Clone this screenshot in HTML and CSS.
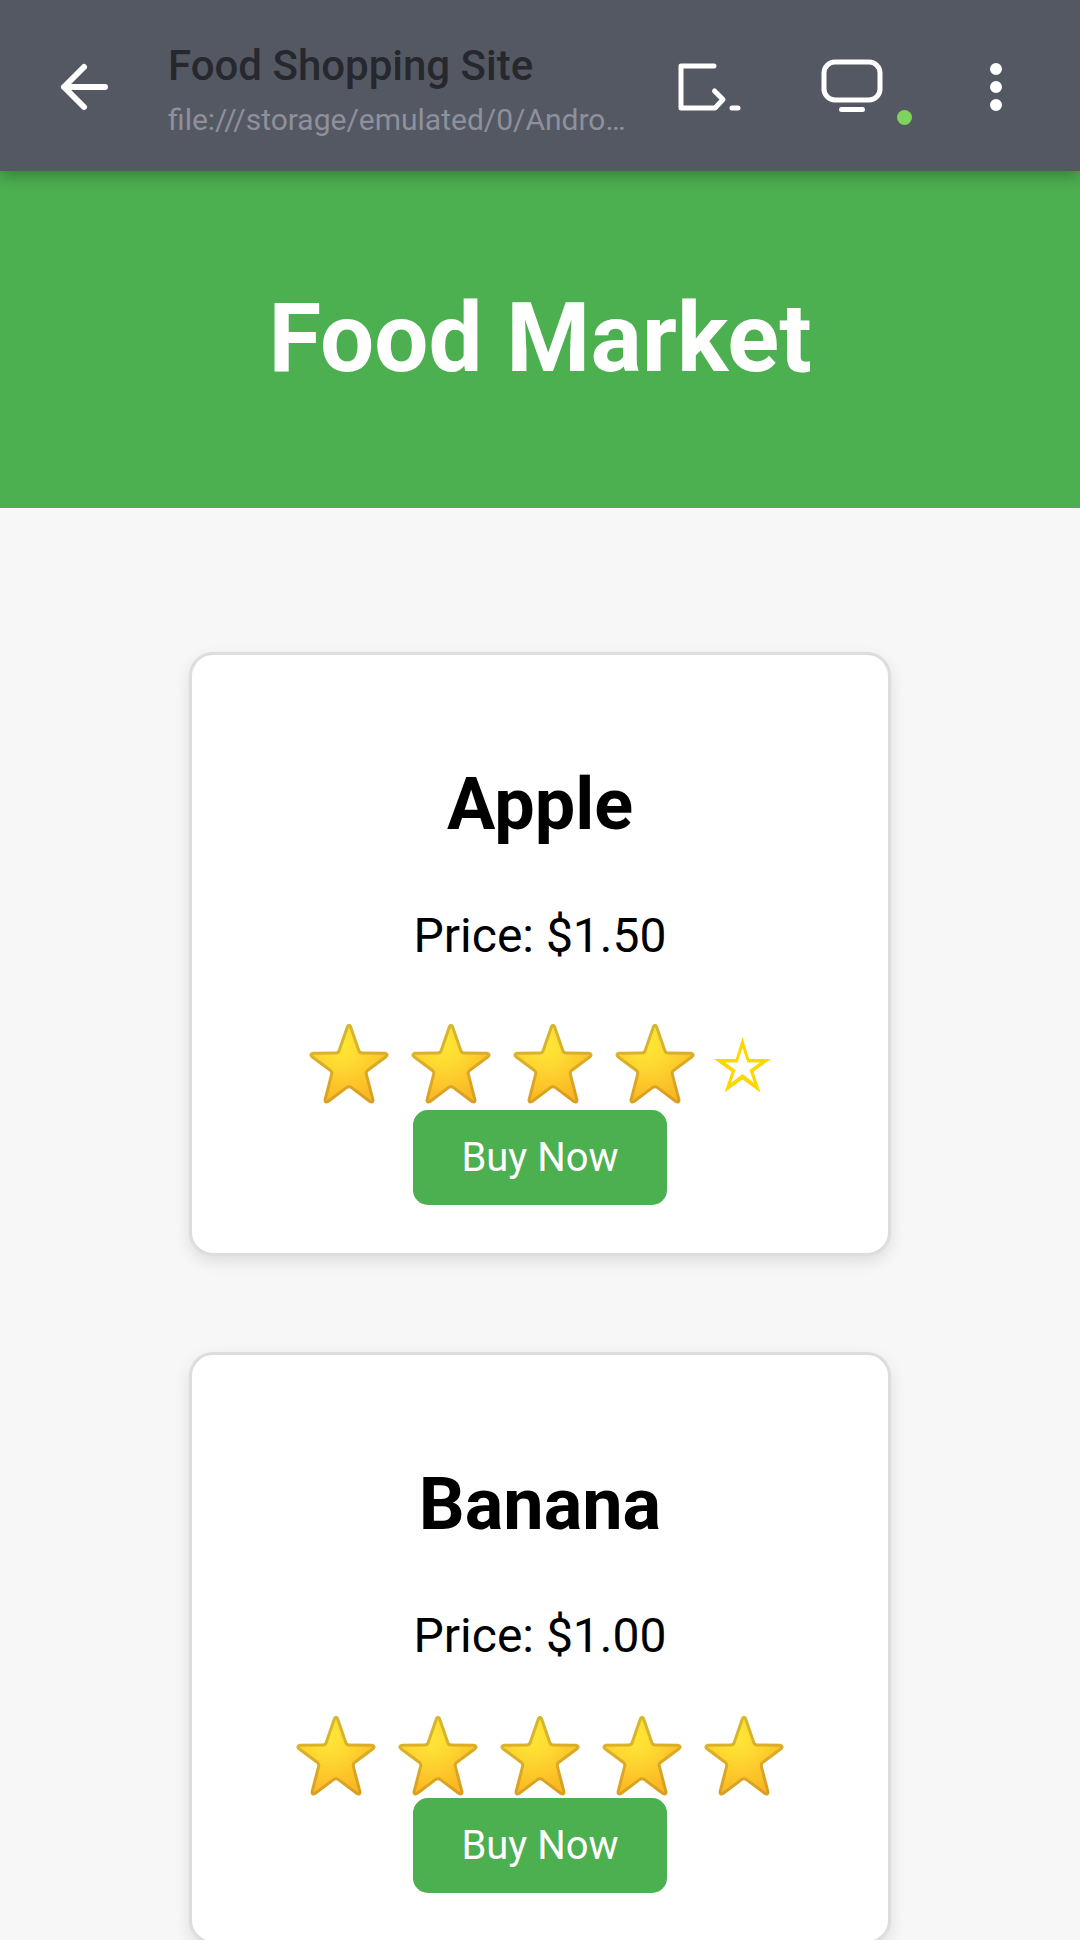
FILE: index.html
```html
<!DOCTYPE html>
<html lang="en">
<head>
<meta charset="utf-8">
<meta name="viewport" content="width=device-width, initial-scale=1">
<title>Food Shopping Site</title>
<link rel="stylesheet" href="styles.css">
</head>
<body>
<svg class="symbols" aria-hidden="true">
  <defs>
    <radialGradient id="gold" gradientUnits="userSpaceOnUse" cx="32" cy="20" r="56">
      <stop offset="0" stop-color="#fee835"/>
      <stop offset="0.35" stop-color="#fedb32"/>
      <stop offset="1" stop-color="#fbb824"/>
    </radialGradient>
    <linearGradient id="rim" gradientUnits="userSpaceOnUse" x1="30" y1="0" x2="48" y2="80">
      <stop offset="0" stop-color="#d2b82e"/>
      <stop offset="0.3" stop-color="#dbb22a"/>
      <stop offset="1" stop-color="#d99d20"/>
    </linearGradient>
    <symbol id="star" viewBox="0 0 80 80">
      <path d="M38.600 2.300Q40 .5 41.400 2.300L49.800 26.500Q50.500 29 53 29L76 29.300Q79.500 30.400 77 32.700L58.500 46.500Q56.800 48 57.300 50L64 76Q64 79 61 77.500L42.500 63.600Q40 62 37.500 63.600L19 77.500Q16 79 16 76L22.700 50Q23.200 48 21.500 46.500L3 32.700Q.5 30.400 4 29.300L27 29Q29.500 29 30.200 26.500Z" fill="url(#gold)" stroke="url(#rim)" stroke-width="3" stroke-linejoin="round"/>
    </symbol>
    <symbol id="star-empty" viewBox="0 0 57 56">
      <path fill="#ffd700" fill-rule="evenodd" d="M28.500 0L35.200 22H57L39.500 34.700L46.500 55.500L28.500 42.500L10.500 55.500L17.500 34.700L0 22H21.800ZM28.500 11L23.600 25.500H11L21.500 33L17 46L28.500 37L40 46L35.500 33L46 25.500H33.400Z"/>
    </symbol>
  </defs>
</svg>
<div class="app">
  <div class="toolbar">
    <button class="tool" type="button" aria-label="Back">
      <svg viewBox="0 0 72 72"><path d="M36 16L16 36L36 56M16 36H57" stroke-width="6"/></svg>
    </button>
    <div class="location">
      <p class="location-title">Food Shopping Site</p>
      <p class="location-url">file:///storage/emulated/0/Andro…</p>
    </div>
    <button class="tool" type="button" aria-label="Console">
      <svg viewBox="0 0 72 72"><path d="M42 15H9V57H43L51 48.500L42.500 40M60 57H66" stroke-width="5"/></svg>
    </button>
    <button class="tool" type="button" aria-label="Desktop mode">
      <svg viewBox="0 0 72 72"><rect x="8" y="11" width="56" height="38" rx="11" stroke-width="5"/><path d="M25.500 58.500H46.500" stroke-width="5"/></svg>
      <span class="status"></span>
    </button>
    <button class="tool" type="button" aria-label="More options">
      <svg viewBox="0 0 72 72"><path d="M36 18h0M36 36h0M36 54h0" stroke-width="12"/></svg>
    </button>
  </div>
  <div class="page">
    <header class="banner"><h1 class="banner-title">Food Market</h1></header>
    <main class="products">
      <article class="card">
        <h2 class="card-name">Apple</h2>
        <p class="card-price">Price: $1.50</p>
        <div class="rating rating-mixed" role="img" aria-label="4 out of 5 stars">
          <svg class="star"><use href="#star"/></svg>
          <svg class="star"><use href="#star"/></svg>
          <svg class="star"><use href="#star"/></svg>
          <svg class="star"><use href="#star"/></svg>
          <svg class="star-empty"><use href="#star-empty"/></svg>
        </div>
        <button class="buy" type="button">Buy Now</button>
      </article>
      <article class="card">
        <h2 class="card-name">Banana</h2>
        <p class="card-price">Price: $1.00</p>
        <div class="rating" role="img" aria-label="5 out of 5 stars">
          <svg class="star"><use href="#star"/></svg>
          <svg class="star"><use href="#star"/></svg>
          <svg class="star"><use href="#star"/></svg>
          <svg class="star"><use href="#star"/></svg>
          <svg class="star"><use href="#star"/></svg>
        </div>
        <button class="buy" type="button">Buy Now</button>
      </article>
    </main>
  </div>
</div>
</body>
</html>
```

FILE: styles.css
```css
* {
  box-sizing: border-box;
}

body,
h1,
h2,
p {
  margin: 0;
}

body {
  font-family: Roboto, "Liberation Sans", sans-serif;
  background: #f7f7f7;
  color: #000;
}

button {
  border: 0;
  font-family: inherit;
  cursor: pointer;
}

.symbols {
  position: absolute;
  width: 0;
  height: 0;
}

.app {
  display: flex;
  flex-direction: column;
  height: 100vh;
}

/* Browser toolbar */
.toolbar {
  position: relative;
  z-index: 1;
  flex: none;
  display: flex;
  align-items: center;
  gap: 48px;
  padding: 36px 48px 33px;
  background: #545863;
  box-shadow: 0 4px 15px rgba(0, 0, 0, 0.3);
}

.tool {
  position: relative;
  flex: none;
  width: 72px;
  height: 72px;
  padding: 0;
  background: none;
}

.tool + .tool {
  margin-left: 24px;
}

.tool svg {
  display: block;
  width: 100%;
  height: 100%;
  fill: none;
  stroke: #fff;
  stroke-linecap: round;
  stroke-linejoin: round;
}

.status {
  position: absolute;
  right: -24px;
  bottom: -2px;
  width: 15px;
  height: 15px;
  border-radius: 50%;
  background: #7ed35c;
}

.location {
  flex: 1;
  min-width: 0;
  padding-top: 6px;
  white-space: nowrap;
}

.location-title {
  font-size: 42px;
  font-weight: 500;
  line-height: 48px;
  color: #26282e;
}

.location-url {
  margin-top: 12px;
  font-size: 30px;
  line-height: 36px;
  color: #8e909c;
}

/* Shop page */
.page {
  flex: 1;
  min-height: 0;
  overflow-y: auto;
  scrollbar-width: none;
}

.banner {
  padding: 111px 48px 113px;
  background: #4caf50;
  color: #fff;
  text-align: center;
}

.banner-title {
  font-size: 96px;
  font-weight: 700;
  line-height: 113px;
}

.products {
  display: flex;
  flex-direction: column;
  align-items: center;
  gap: 96px;
  padding: 144px 48px;
}

.card {
  display: flex;
  flex-direction: column;
  align-items: center;
  width: 65vw;
  padding: 108px 48px 48px;
  background: #fff;
  border: 3px solid #ddd;
  border-radius: 24px;
  box-shadow: 0 6px 15px rgba(0, 0, 0, 0.1);
}

.card-name {
  font-size: 72px;
  font-weight: 700;
  line-height: 84px;
}

.card-price {
  margin-top: 60px;
  font-size: 48px;
  line-height: 58px;
}

.rating {
  display: flex;
  align-items: center;
  height: 87px;
  margin-top: 46px;
  padding-top: 2px;
}

.rating-mixed {
  height: 99px;
  padding-top: 6px;
}

.star {
  width: 80px;
  height: 80px;
  margin: 0 11px;
}

.star-empty {
  width: 57px;
  height: 56px;
  margin: 2px 12px 0 8px;
}

.buy {
  padding: 24px 48px;
  border-radius: 15px;
  background: #4caf50;
  color: #fff;
  font-size: 40px;
  line-height: 47px;
}
```
